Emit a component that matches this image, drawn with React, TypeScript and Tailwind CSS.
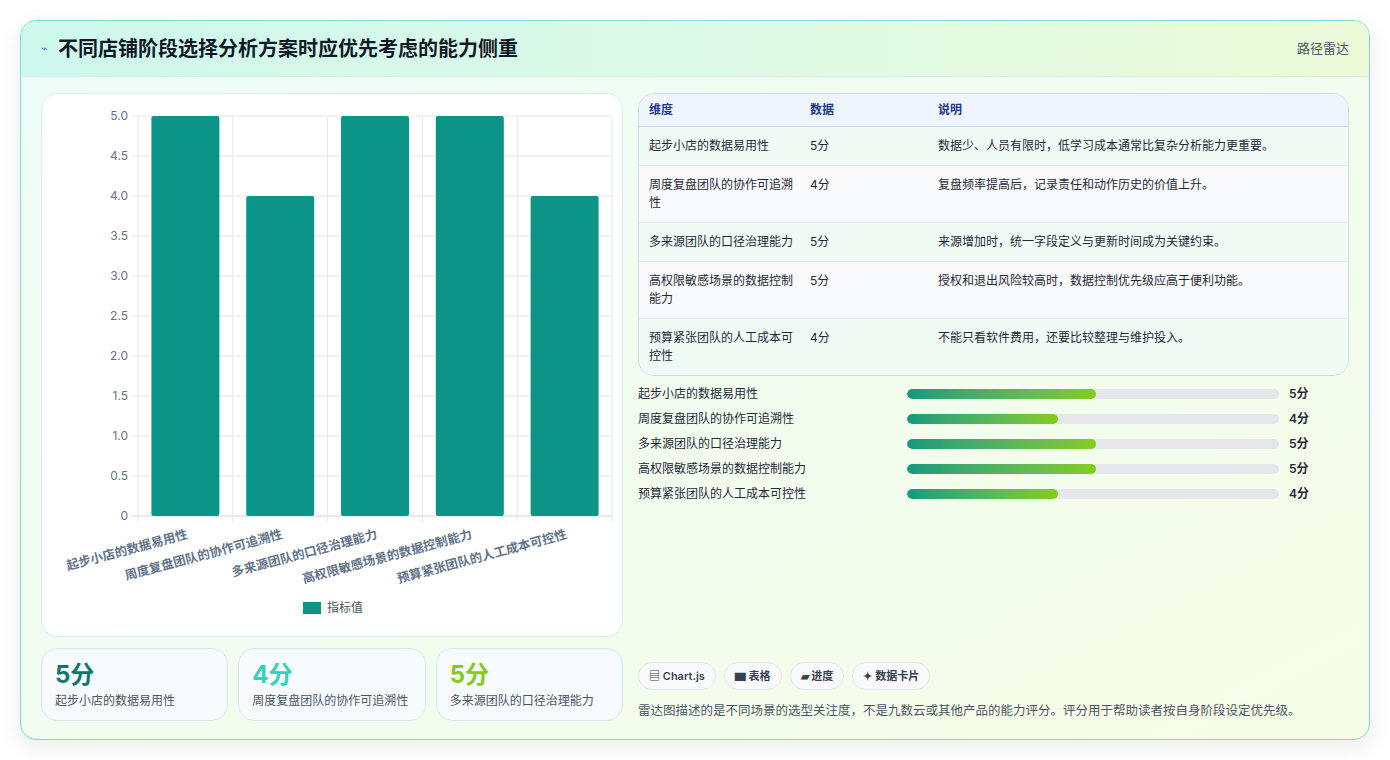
import React from "react";

const rows = [
  { name: "起步小店的数据易用性", v: 5, desc: "数据少、人员有限时，低学习成本通常比复杂分析能力更重要。" },
  { name: "周度复盘团队的协作可追溯性", v: 4, desc: "复盘频率提高后，记录责任和动作历史的价值上升。" },
  { name: "多来源团队的口径治理能力", v: 5, desc: "来源增加时，统一字段定义与更新时间成为关键约束。" },
  { name: "高权限敏感场景的数据控制能力", v: 5, desc: "授权和退出风险较高时，数据控制优先级应高于便利功能。" },
  { name: "预算紧张团队的人工成本可控性", v: 4, desc: "不能只看软件费用，还要比较整理与维护投入。" },
];

function Chart() {
  const x0 = 96, x1 = 570, y0 = 22, yb = 422;
  const cw = (x1 - x0) / 5;
  const ticks = [0, 0.5, 1, 1.5, 2, 2.5, 3, 3.5, 4, 4.5, 5];
  return (
    <svg width="582" height="544" viewBox="0 0 582 544" style={{ fontFamily: "Inter, 'Noto Sans CJK SC', sans-serif" }}>
      {ticks.map((t) => {
        const y = yb - t * 80;
        return (
          <g key={t}>
            <line x1={x0 - 6} x2={x1} y1={y} y2={y} stroke={t === 0 ? "#cbd5e1" : "#e5e7eb"} />
            <text x={x0 - 10} y={y + 4} textAnchor="end" fontSize="12" fill="#6b7280">{t === 0 ? "0" : t.toFixed(1)}</text>
          </g>
        );
      })}
      {[0, 1, 2, 3, 4, 5].map((i) => (
        <line key={i} x1={x0 + i * cw} x2={x0 + i * cw} y1={y0} y2={yb + 6} stroke="#e5e7eb" />
      ))}
      {rows.map((r, i) => {
        const cx = x0 + i * cw + cw / 2;
        const h = r.v * 80;
        return (
          <g key={i}>
            <rect x={cx - 34} y={yb - h} width="68" height={h} rx="2" fill="#0d9488" />
            <text x={cx + 3} y={yb + 22} textAnchor="end" fontSize="12.5" fontWeight="600" fill="#64748b" transform={`rotate(-15 ${cx + 3} ${yb + 22})`}>{r.name}</text>
          </g>
        );
      })}
      <rect x="261" y="508" width="18" height="12" fill="#0d9488" />
      <text x="285" y="518" fontSize="12" fill="#4b5563">指标值</text>
    </svg>
  );
}

export default function App() {
  const colors = ["text-[#0f766e]", "text-[#2dd4bf]", "text-[#84cc16]"];
  return (
    <div className="w-[1390px] h-[760px] bg-white p-5" style={{ fontFamily: "Inter, 'Noto Sans CJK SC', sans-serif" }}>
      <div className="h-[720px] rounded-2xl border border-[#7ddbcf] bg-gradient-to-br from-[#eefdf9] to-[#f6fde6] shadow-[0_8px_24px_rgba(0,0,0,0.08)] overflow-hidden flex flex-col">
        <div className="h-[56px] shrink-0 flex items-center justify-between px-5 bg-gradient-to-r from-[#cdf8ec] via-[#dcf9e6] to-[#ecfbd8] border-b border-[#d7f0e6]">
          <div className="flex items-center gap-2.5">
            <span className="text-[#3b82f6] text-[11px]">⌁</span>
            <span className="text-[20px] font-bold text-[#111827]">不同店铺阶段选择分析方案时应优先考虑的能力侧重</span>
          </div>
          <span className="text-[13px] text-[#4b5563]">路径雷达</span>
        </div>
        <div className="flex-1 flex gap-[15px] px-5 pt-4 pb-5">
          <div className="w-[582px] flex flex-col gap-[11px]">
            <div className="h-[544px] rounded-2xl bg-white border border-[#e2e8f0]"><Chart /></div>
            <div className="flex gap-[10px]">
              {rows.slice(0, 3).map((r, i) => (
                <div key={i} className="flex-1 h-[73px] rounded-2xl border border-[#dbe7f0] bg-[#f8fbfe] px-[13px] pt-[11px]">
                  <div className={`text-[24px] font-bold leading-[30px] ${colors[i]}`}>{r.v}分</div>
                  <div className="text-[12px] text-[#4b5563] mt-[2px]">{r.name}</div>
                </div>
              ))}
            </div>
          </div>
          <div className="flex-1 flex flex-col">
            <div className="rounded-2xl border border-[#d1dbe6] overflow-hidden text-[12px]">
              <div className="flex h-[33px] items-center bg-[#eef5fe] border-b border-[#cfd9e6] font-semibold text-[#1e3a8a]">
                <div className="w-[171px] pl-[10px]">维度</div>
                <div className="w-[128px]">数据</div>
                <div className="flex-1">说明</div>
              </div>
              {rows.map((r, i) => (
                <div key={i} className={`flex py-[10px] leading-[18px] text-[#1f2937] ${i < 4 ? "border-b border-[#e2e8f0]" : ""} ${i % 2 ? "bg-[#f8fafc]" : "bg-[#f1fbf6]"}`}>
                  <div className="w-[171px] pl-[10px] pr-3">{r.name}</div>
                  <div className="w-[128px]">{r.v}分</div>
                  <div className="flex-1">{r.desc}</div>
                </div>
              ))}
            </div>
            <div className="mt-[9px] flex flex-col gap-[7px]">
              {rows.map((r, i) => (
                <div key={i} className="flex items-center h-[18px] text-[12px] text-[#1f2937]">
                  <div className="w-[269px]">{r.name}</div>
                  <div className="w-[372px] h-[10px] rounded-full bg-[#e5e7eb] overflow-hidden">
                    <div className="h-full rounded-full bg-gradient-to-r from-[#0f9a7c] to-[#84cc16]" style={{ width: `${r.v === 5 ? 50.8 : 40.6}%` }} />
                  </div>
                  <div className="ml-[10px] font-semibold">{r.v}分</div>
                </div>
              ))}
            </div>
            <div className="mt-auto">
              <div className="flex gap-2 text-[11px] font-semibold text-[#374151]">
                {["▤ Chart.js", "▆ 表格", "▰ 进度", "✦ 数据卡片"].map((c) => (
                  <span key={c} className="h-[28px] px-[10px] flex items-center rounded-full border border-[#e2e8f0] bg-[#f8fafc]">{c}</span>
                ))}
              </div>
              <div className="mt-[12px] text-[12.5px] text-[#4b5563]">雷达图描述的是不同场景的选型关注度，不是九数云或其他产品的能力评分。评分用于帮助读者按自身阶段设定优先级。</div>
            </div>
          </div>
        </div>
      </div>
    </div>
  );
}
